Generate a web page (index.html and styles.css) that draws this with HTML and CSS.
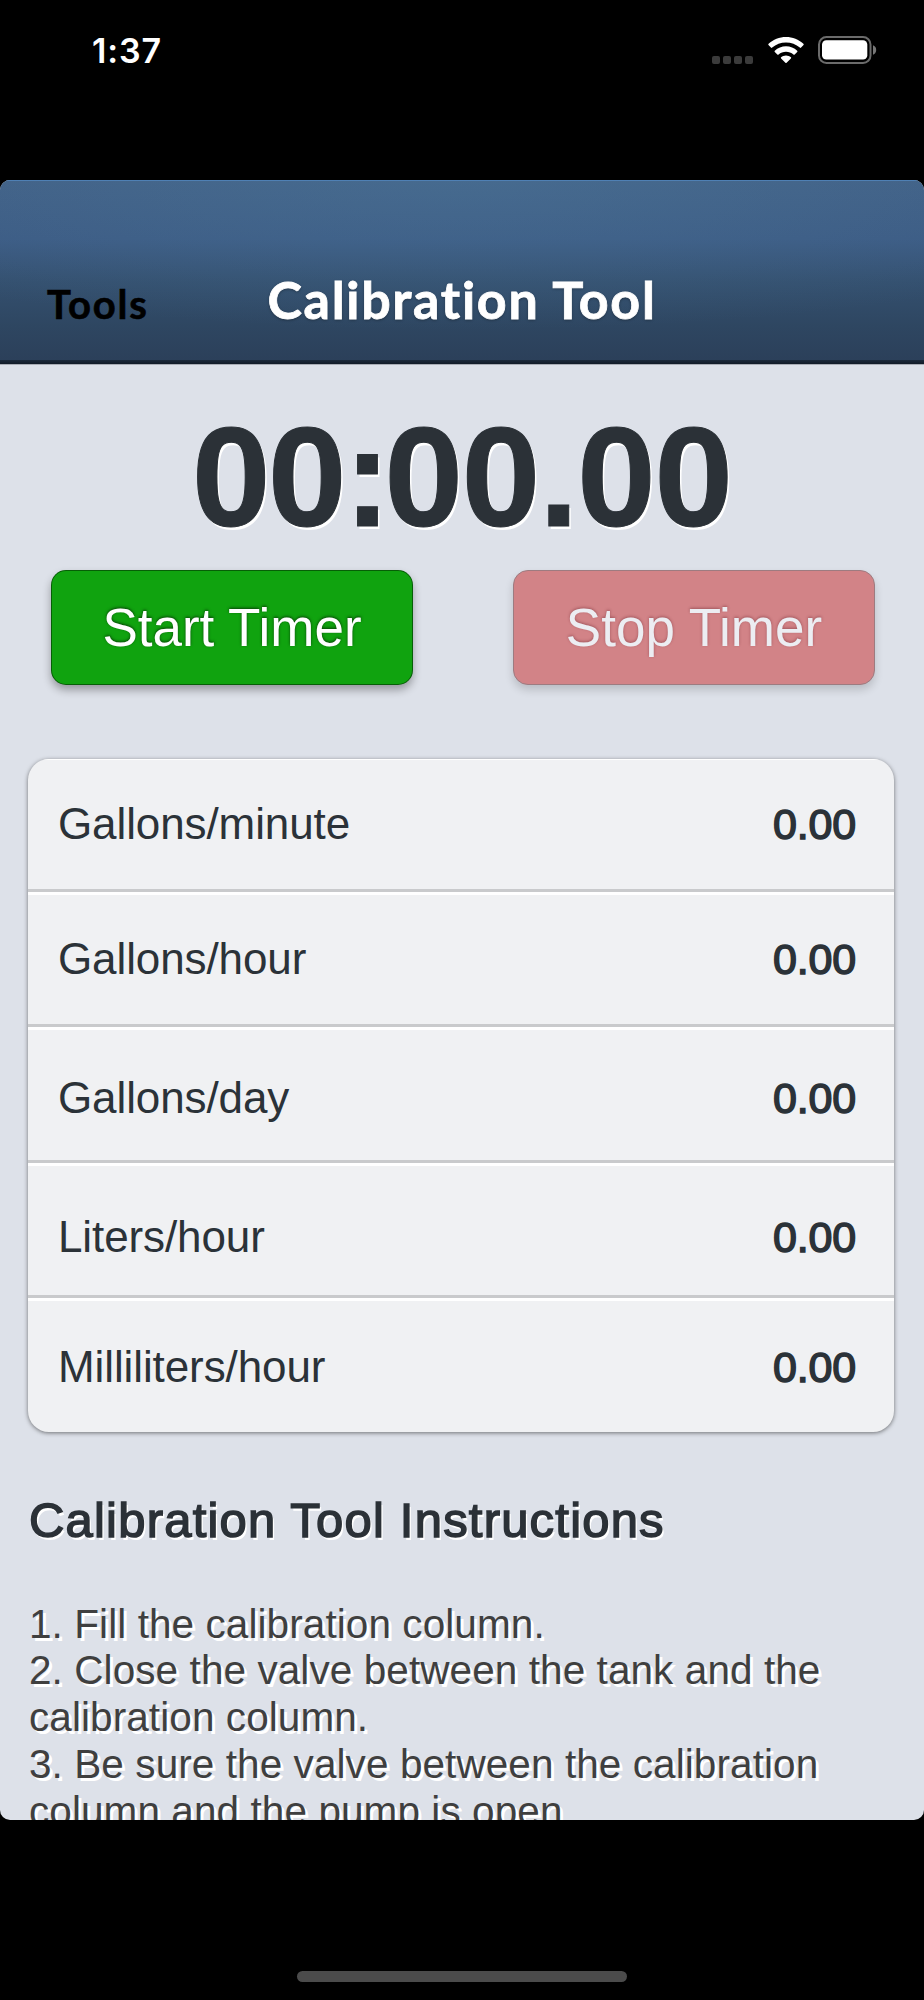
FILE: index.html
```html
<!DOCTYPE html>
<html lang="en">
<head>
<meta charset="utf-8">
<title>Calibration Tool</title>
<link rel="stylesheet" href="styles.css">
</head>
<body>
<div class="phone">
  <div class="status">
    <span class="clock">1:37</span>
    <div class="indicators">
      <div class="signal"><i></i><i></i><i></i><i></i></div>
      <svg class="wifi" width="36" height="27" viewBox="0 0 36 27" fill="#fff">
        <path d="M18 0C11.400 0 5.200 2.500 .6 6.800c-.5.500-.5.900-.1 1.300l2.400 2.500c.4.400.9.400 1.300 0C7.900 7.200 12.800 5.400 18 5.400s10.100 1.800 13.800 5.200c.4.400.9.400 1.300 0l2.400-2.500c.4-.4.400-.8-.1-1.300C30.800 2.500 24.600 0 18 0z"/>
        <path d="M18 9.300c-4.200 0-8.200 1.600-11.200 4.400-.4.400-.4.900 0 1.300l2.500 2.500c.4.400.8.400 1.300 0 2-1.800 4.600-2.800 7.400-2.800s5.400 1 7.400 2.800c.5.400.9.400 1.300 0l2.500-2.500c.4-.4.400-.9 0-1.300-3-2.800-7-4.400-11.200-4.400z"/>
        <path d="M18 18.400c-1.900 0-3.600.7-4.900 1.800-.4.400-.4.800 0 1.200l4.300 4.400c.4.400.8.400 1.200 0l4.300-4.400c.4-.4.400-.8 0-1.200-1.300-1.100-3-1.800-4.900-1.800z"/>
      </svg>
      <svg class="battery" width="59" height="28" viewBox="0 0 59 28">
        <rect x="1" y="1" width="51.500" height="26" rx="7.500" fill="none" stroke="#6b6b6b" stroke-width="2"/>
        <rect x="4" y="4.300" width="45.300" height="19.200" rx="4.300" fill="#fff"/>
        <path d="M55 9.300c2 .6 3.200 2.500 3.200 4.700s-1.200 4.100-3.200 4.700z" fill="#777"/>
      </svg>
    </div>
  </div>

  <main class="page">
    <header class="bar">
      <span class="back">Tools</span>
      <h1 class="title">Calibration Tool</h1>
    </header>

    <div class="timer"><span class="digits">00</span><span class="colon">:</span>00.00</div>

    <div class="buttons">
      <button class="button start">Start Timer</button>
      <button class="button stop">Stop Timer</button>
    </div>

    <ul class="card">
      <li class="row row-first"><span>Gallons/minute</span><b class="value">0.00</b></li>
      <li class="row row-second"><span>Gallons/hour</span><b class="value">0.00</b></li>
      <li class="row row-third"><span>Gallons/day</span><b class="value">0.00</b></li>
      <li class="row row-fourth"><span>Liters/hour</span><b class="value">0.00</b></li>
      <li class="row row-last"><span>Milliliters/hour</span><b class="value">0.00</b></li>
    </ul>

    <h2 class="heading">Calibration Tool Instructions</h2>
    <p class="steps">1. Fill the calibration column.<br>2. Close the valve between the tank and the<br>calibration column.<br>3. Be sure the valve between the calibration<br>column and the pump is open.</p>
  </main>

  <div class="home"></div>
</div>
</body>
</html>
```
FILE: styles.css
```css
* { box-sizing: border-box; }

body {
  margin: 0;
  background: #000;
  font-family: "Liberation Sans", Arial, sans-serif;
}

.phone {
  width: 924px;
  height: 2000px;
  display: flex;
  flex-direction: column;
  background: #000;
  overflow: hidden;
}

.status {
  height: 180px;
  flex: none;
  padding: 30px 47px 0 92px;
  display: flex;
  justify-content: space-between;
  align-items: flex-start;
}

.clock {
  font: 600 34px/42px Inter, sans-serif;
  letter-spacing: .9px;
  color: #fff;
}

.indicators {
  display: flex;
  align-items: flex-start;
  padding-top: 6px;
}

.signal {
  display: flex;
  gap: 3.500px;
  padding-top: 20px;
  margin-right: 15px;
}

.signal i {
  width: 7.600px;
  height: 7.500px;
  border-radius: 2px;
  background: #3b3b3b;
}

.wifi { margin: 1px 14px 0 0; }

.page {
  height: 1640px;
  flex: none;
  overflow: hidden;
  border-radius: 10px;
  background: #dde1e9;
}

.bar {
  height: 185px;
  position: relative;
  display: flex;
  justify-content: center;
  padding-top: 89px;
  border-bottom: 1px solid #a9adb5;
  background:
    linear-gradient(#4f80b4, #4f80b4) top / 100% 1px no-repeat,
    linear-gradient(#1c2a3b, #121b27) bottom / 100% 4px no-repeat,
    radial-gradient(ellipse 760px 150px at 50% 0, rgba(78, 122, 156, .4), rgba(78, 122, 156, 0)),
    linear-gradient(#416086 0, #3c5b84 32%, #34506f 55%, #2e4661 80%, #2b3f59 100%);
}

.back {
  position: absolute;
  left: 47px;
  top: 98px;
  font: 700 40px/52px Lato, sans-serif;
  letter-spacing: 1.800px;
  color: #000;
  -webkit-text-stroke: .6px #000;
}

.title {
  margin: 0;
  font: 700 52px/60px Lato, sans-serif;
  letter-spacing: 1.700px;
  color: #fff;
  -webkit-text-stroke: .8px #fff;
  text-shadow: 0 1px 3px rgba(0, 0, 0, .4);
}

.timer {
  margin-top: 43px;
  text-align: center;
  font-size: 141px;
  line-height: 139px;
  font-weight: 700;
  letter-spacing: -1.100px;
  color: #2b3137;
  -webkit-text-stroke: 1px #2b3137;
  text-shadow: 2px 3px 0 #fff;
}

.digits { letter-spacing: -2.500px; }
.colon { letter-spacing: -.045em; }

.buttons {
  display: flex;
  justify-content: space-between;
  padding: 23px 49px 0 51px;
}

.button {
  width: 362px;
  height: 115px;
  padding: 0;
  border: 1px solid rgba(0, 50, 0, .6);
  border-radius: 15px;
  font: 53px/1 "Liberation Sans", Arial, sans-serif;
  color: #fff;
  text-shadow: 0 -1px 3px rgba(0, 0, 0, .6);
  box-shadow: 0 5px 9px rgba(0, 0, 0, .32);
}

.start { background-color: #10a30f; }

.stop {
  background-color: #d28387;
  border-color: #9d7b80;
  color: #ecedf2;
  text-shadow: 0 -1px 3px rgba(90, 20, 30, .4);
  box-shadow: 0 5px 9px rgba(0, 0, 0, .16);
}

.card {
  list-style: none;
  margin: 74px 30px 0 28px;
  padding: 0;
  height: 673px;
  border-radius: 21px;
  overflow: hidden;
  background: #f0f1f3;
  box-shadow: 0 1px 4px rgba(0, 0, 0, .5);
}

.row {
  display: flex;
  justify-content: space-between;
  height: 136px;
  padding: 41px 38px 0 30px;
  border-top: 3px solid #fff;
  border-bottom: 3px solid #c9cacc;
  font-size: 44px;
  line-height: 52px;
  letter-spacing: -.1px;
  color: #2b3238;
}

.row-first { height: 133px; padding-top: 38px; border-top-width: 1px; }
.row-second { height: 135px; padding-top: 38px; }
.row-third { height: 136px; padding-top: 42px; }
.row-fourth { height: 135px; padding-top: 45px; }
.row-last { padding-top: 40px; border-bottom: 0; }

.value {
  font-size: 43px;
  font-weight: 400;
  letter-spacing: -.2px;
  -webkit-text-stroke: 1.500px #2b3238;
}

.heading {
  margin: 58px 0 0 29px;
  font-size: 49px;
  line-height: 60px;
  font-weight: 400;
  letter-spacing: 1.200px;
  white-space: nowrap;
  color: #2b3137;
  -webkit-text-stroke: 1.500px #2b3137;
  text-shadow: 2px 3px 0 #fff;
}

.steps {
  margin: 50.500px 0 0 29px;
  font-size: 40.500px;
  line-height: 46.800px;
  letter-spacing: .08px;
  white-space: nowrap;
  color: #3f3f3f;
  text-shadow: 3px 3px 0 #fff;
}

.home {
  width: 330px;
  height: 11px;
  margin: 151px auto 0;
  border-radius: 6px;
  background: #4b4b4b;
}
```
